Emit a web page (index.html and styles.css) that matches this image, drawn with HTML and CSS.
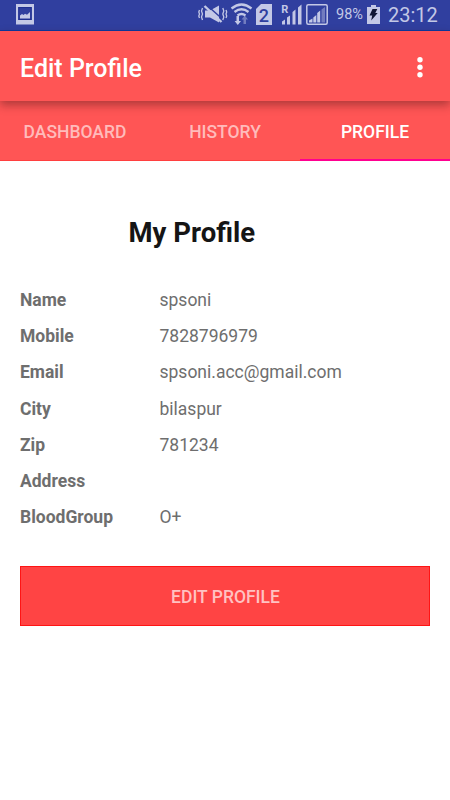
FILE: index.html
```html
<!DOCTYPE html>
<html lang="en">
<head>
<meta charset="utf-8">
<title>Edit Profile</title>
<link rel="stylesheet" href="styles.css">
</head>
<body>
<div class="status">
  <svg class="photo" width="18" height="21" viewBox="0 0 18 21"><path fill="#c3c8e6" fill-rule="evenodd" d="M0 0h18v20.500H0zM2.300 3v13h13.400V3z"/><path fill="#202f91" fill-rule="evenodd" d="M2.300 3h13.400v13H2.300zM3.500 4.300v10.400h11V4.300z"/><path fill="#303f9f" d="M3.500 4.300h11v10.400h-11z"/><path fill="#c3c8e6" d="M4 14.500v-3l2-1.500 1.500 1 1.500-1.200 2 1 3-2.800v6.500z"/></svg>
  <svg class="indicators" width="134" height="31" viewBox="196 0 134 31">
    <g fill="#c3c8e6">
      <path d="M205 10.500h5l9-5v17l-9-5h-5z"/>
      <path d="M206 4.500l17 15" stroke="#303f9f" stroke-width="1.500"/>
      <path d="M204.500 6l17 16" stroke="#c3c8e6" stroke-width="2.400"/>
      <path fill="none" stroke="#c3c8e6" stroke-width="1.300" d="M202.500 8l-1 3 1 3-1 3 1 3M199.500 10l-.7 2 .7 2-.7 2 .7 2M222.800 8l1 3-1 3 1 3-1 3M226 10l.7 2-.7 2 .7 2-.7 2"/>
      <g fill="none" stroke="#c3c8e6" stroke-width="2.300"><path d="M231.500 8.500q10-8 20 0M234.500 12q7-5.500 14 0M237.500 15.500q4-3 8 0"/></g>
      <path d="M236.500 16h2.500v5h2l-3.200 4-3.200-4h1.900z"/>
      <path opacity=".45" d="M243.500 24h2.500v-4.500h2l-3.200-4-3.200 4h1.900z"/>
      <path d="M261 4h11v21h-16V9z"/>
      <path d="M282 24.500v-3l3-2v5zM287 24.500v-7l3-2v9zM292.500 24.500V12l3-2.500v15zM298 24.500V7.500l3.500-3v20z"/>
      <rect x="306.800" y="4.800" width="20.400" height="19.400" rx="1.500" fill="none" stroke="#c3c8e6" stroke-width="1.500"/>
      <path d="M309 22.500v-2l3.500-2v4zM313.300 22.500v-5l3-2.500v7.500zM317.200 22.500V13l3-2.500v12z"/>
      <path opacity=".45" d="M321.500 22.500V9.500L325 7v15.500z"/>
    </g>
    <text class="sim" x="258.800" y="21.500">2</text>
    <text class="roam" x="281.200" y="12.500">R</text>
  </svg>
  <span class="percent">98%</span>
  <svg class="battery" width="13" height="19" viewBox="0 0 13 19"><path fill="#c3c8e6" d="M4 0h5v2h4v17H0V2h4z"/><path fill="#111735" d="M5.500 4h4.800L8.300 8h2.400L4.200 15.500l1-5H2.500z"/></svg>
  <span class="clock">23:12</span>
</div>
<header class="bar">
  <h1>Edit Profile</h1>
  <svg class="more" width="6" height="22" viewBox="0 0 6 22"><g fill="#fff"><circle cx="3" cy="2.700" r="2.700"/><circle cx="3" cy="10.200" r="2.700"/><circle cx="3" cy="17.700" r="2.700"/></g></svg>
</header>
<nav class="tabs">
  <a class="tab">DASHBOARD</a>
  <a class="tab">HISTORY</a>
  <a class="tab active">PROFILE</a>
</nav>
<main>
  <h2>My Profile</h2>
  <dl>
    <dt>Name</dt><dd>spsoni</dd>
    <dt>Mobile</dt><dd>7828796979</dd>
    <dt>Email</dt><dd>spsoni.acc@gmail.com</dd>
    <dt>City</dt><dd>bilaspur</dd>
    <dt>Zip</dt><dd>781234</dd>
    <dt>Address</dt><dd></dd>
    <dt>BloodGroup</dt><dd>O+</dd>
  </dl>
  <button class="edit">EDIT PROFILE</button>
</main>
</body>
</html>
```
FILE: styles.css
```css
* { box-sizing: border-box; }
body {
  margin: 0;
  height: 800px;
  background: #fff;
  font-family: Roboto, "Liberation Sans", sans-serif;
  overflow: hidden;
}
.status {
  height: 31px;
  display: flex;
  background: #303f9f;
  border-bottom: 1px solid #0b3aa0;
  color: #c3c8e6;
}
.photo { margin: 4px 0 0 16px; flex: none; }
.indicators { margin-left: 162px; flex: none; }
.sim { font: 500 18px Roboto, sans-serif; fill: #303f9f; }
.roam { font: bold 11px Roboto, sans-serif; fill: #c3c8e6; }
.percent { width: 30px; margin-left: 6px; font-size: 14.5px; line-height: 30px; }
.battery { margin: 5px 0 0 1px; flex: none; }
.clock { margin-left: 8px; font-size: 20px; line-height: 30px; }
.bar {
  position: relative;
  height: 70px;
  padding: 4px 27px 0 20px;
  display: flex;
  align-items: center;
  justify-content: space-between;
  background: #ff5555;
  box-shadow: 0 4px 9px rgba(60, 20, 20, .42);
}
h1 { margin: 2px 0 0; color: #fff; font-size: 25px; font-weight: 500; line-height: 30px; }
.tabs {
  height: 60px;
  display: grid;
  grid-template-columns: repeat(3, 1fr);
  background: #ff5555;
}
.tab {
  height: 60px;
  padding-top: 2px;
  border-bottom: 1px solid #ff3f3f;
  color: #ffbbbb;
  font-size: 17.5px;
  font-weight: 500;
  line-height: 58px;
  text-align: center;
}
.tab.active { color: #fff; border-bottom: 2px solid #ff0090; }
main { padding: 55px 20px 0; }
h2 {
  margin: 0 0 0 108.5px;
  color: #151515;
  font-size: 27.5px;
  font-weight: 700;
  line-height: 34px;
}
dl {
  margin: 33px 0 0;
  display: grid;
  grid-template-columns: 139.5px 1fr;
  grid-auto-rows: 36.2px;
  color: #6e6e6e;
  font-size: 17.5px;
  line-height: 35px;
}
dt { font-weight: 700; }
dd { margin: 0; }
.edit {
  display: block;
  width: 100%;
  height: 60px;
  margin-top: 29.3px;
  padding: 2px 0 0 1px;
  border: 1px solid #ff1414;
  border-radius: 0;
  background: #ff4444;
  color: #ffc2c2;
  font: 500 17.5px Roboto, sans-serif;
}
```
